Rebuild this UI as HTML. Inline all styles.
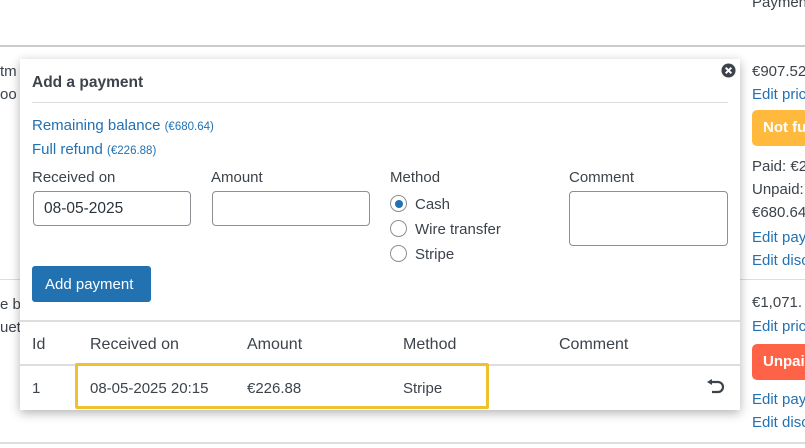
<!DOCTYPE html>
<html><head><meta charset="utf-8"><style>
*{box-sizing:border-box;margin:0;padding:0}
html,body{width:805px;height:448px;overflow:hidden}
body{background:#fff;font-family:"Liberation Sans",sans-serif;color:#3c434a;position:relative;font-size:15px}
.a{position:absolute;white-space:nowrap}
.l{color:#2271b1}
.hr{position:absolute;height:1px;background:#ccc}
.modal{position:absolute;left:20px;top:59px;width:720px;height:351px;background:#fff;box-shadow:0 3px 10px rgba(0,0,0,.3)}
.inp{position:absolute;border:1px solid #8c8f94;border-radius:4px;background:#fff}
.rad{position:absolute;width:17px;height:17px;border:1px solid #8c8f94;border-radius:50%}
.badge{position:absolute;left:0;width:53px;height:36px;border-radius:5px 0 0 5px;color:#fff;font-weight:bold;font-size:15px;padding:9px 0 0 11px;white-space:nowrap;overflow:hidden}
#rc{position:absolute;left:752px;top:0;width:53px;height:448px;overflow:hidden}
#rc .a{left:0}
</style></head><body>
<div class="hr" style="left:0;top:45px;width:805px;height:2px;background:#ccc"></div>
<div class="a" style="left:0;top:63px">tm</div>
<div class="a" style="left:0;top:86px">oo</div>
<div class="hr" style="left:0;top:279px;width:805px;background:#ddd"></div>
<div class="a" style="left:0;top:296px">e b</div>
<div class="a" style="left:0;top:319px">uet</div>
<div class="hr" style="left:0;top:442px;width:805px;height:2px;background:#ddd"></div>

<div id="rc">
<div class="a" style="top:-6px">Payment</div>
<div class="a" style="top:63px">€907.52</div>
<div class="a l" style="top:86px">Edit price</div>
<div class="badge" style="top:110px;background:#ffb93c">Not fully</div>
<div class="a" style="top:158px">Paid: €226</div>
<div class="a" style="top:181px">Unpaid:</div>
<div class="a" style="top:204px">€680.64</div>
<div class="a l" style="top:229px">Edit payments</div>
<div class="a l" style="top:252px">Edit discount</div>
<div class="a" style="top:294px">€1,071.</div>
<div class="a l" style="top:318px">Edit price</div>
<div class="badge" style="top:344px;background:#ff6347">Unpaid</div>
<div class="a l" style="top:391px">Edit payments</div>
<div class="a l" style="top:414px">Edit discount</div>
</div>

<div class="modal">
<div class="a" style="left:12px;top:15px;font-weight:bold;font-size:15.5px;color:#3c434a">Add a payment</div>
<svg class="a" style="left:701px;top:4px" width="15" height="15" viewBox="0 0 16 16"><circle cx="8" cy="8" r="7.5" fill="#3c434a"/><path d="M5 5L11 11M11 5L5 11" stroke="#fff" stroke-width="2.2"/></svg>
<div class="hr" style="left:12px;top:43px;width:696px;background:#ddd"></div>
<div class="a l" style="left:12px;top:58px">Remaining balance <span style="font-size:11.5px">(€680.64)</span></div>
<div class="a l" style="left:12px;top:82px">Full refund <span style="font-size:11.5px">(€226.88)</span></div>
<div class="a" style="left:12px;top:110px">Received on</div>
<div class="a" style="left:191px;top:110px">Amount</div>
<div class="a" style="left:370px;top:110px">Method</div>
<div class="a" style="left:549px;top:110px">Comment</div>
<div class="inp" style="left:13px;top:132px;width:158px;height:35px;padding:8px 0 0 10px;font-size:15.5px;color:#2c3338">08-05-2025</div>
<div class="inp" style="left:192px;top:132px;width:158px;height:35px"></div>
<div class="inp" style="left:549px;top:132px;width:159px;height:55px"></div>
<div class="rad" style="left:370px;top:136px"><div style="position:absolute;left:3.5px;top:3.5px;width:8px;height:8px;border-radius:50%;background:#2271b1"></div></div>
<div class="rad" style="left:370px;top:161px"></div>
<div class="rad" style="left:370px;top:186px"></div>
<div class="a" style="left:395px;top:137px">Cash</div>
<div class="a" style="left:395px;top:162px">Wire transfer</div>
<div class="a" style="left:395px;top:187px">Stripe</div>
<div class="a" style="left:12px;top:207px;width:119px;height:36px;background:#2271b1;border-radius:3px;color:#fff;font-size:15px;padding:10px 0 0 13px">Add payment</div>
<div class="hr" style="left:0;top:261px;width:720px;height:2px;background:#ddd"></div>
<div class="a" style="left:12px;top:277px;font-size:16px">Id</div>
<div class="a" style="left:70px;top:277px;font-size:16px">Received on</div>
<div class="a" style="left:227px;top:277px;font-size:16px">Amount</div>
<div class="a" style="left:383px;top:277px;font-size:16px">Method</div>
<div class="a" style="left:539px;top:277px;font-size:16px">Comment</div>
<div class="hr" style="left:0;top:305px;width:720px;height:2px;background:#ddd"></div>
<div class="a" style="left:12px;top:321px">1</div>
<div class="a" style="left:70px;top:321px">08-05-2025 20:15</div>
<div class="a" style="left:227px;top:321px">€226.88</div>
<div class="a" style="left:383px;top:321px">Stripe</div>
<div class="a" style="left:55px;top:304px;width:414px;height:46px;border:3px solid #f0c030;border-radius:2px"></div>
<svg class="a" style="left:686px;top:320px" width="20" height="17" viewBox="0 0 20 17"><path d="M5 3H12A5 5 0 0 1 12 13H6" fill="none" stroke="#3c434a" stroke-width="2.2"/><path d="M1 3L6 0V6Z" fill="#3c434a"/></svg>
</div>
</body></html>
